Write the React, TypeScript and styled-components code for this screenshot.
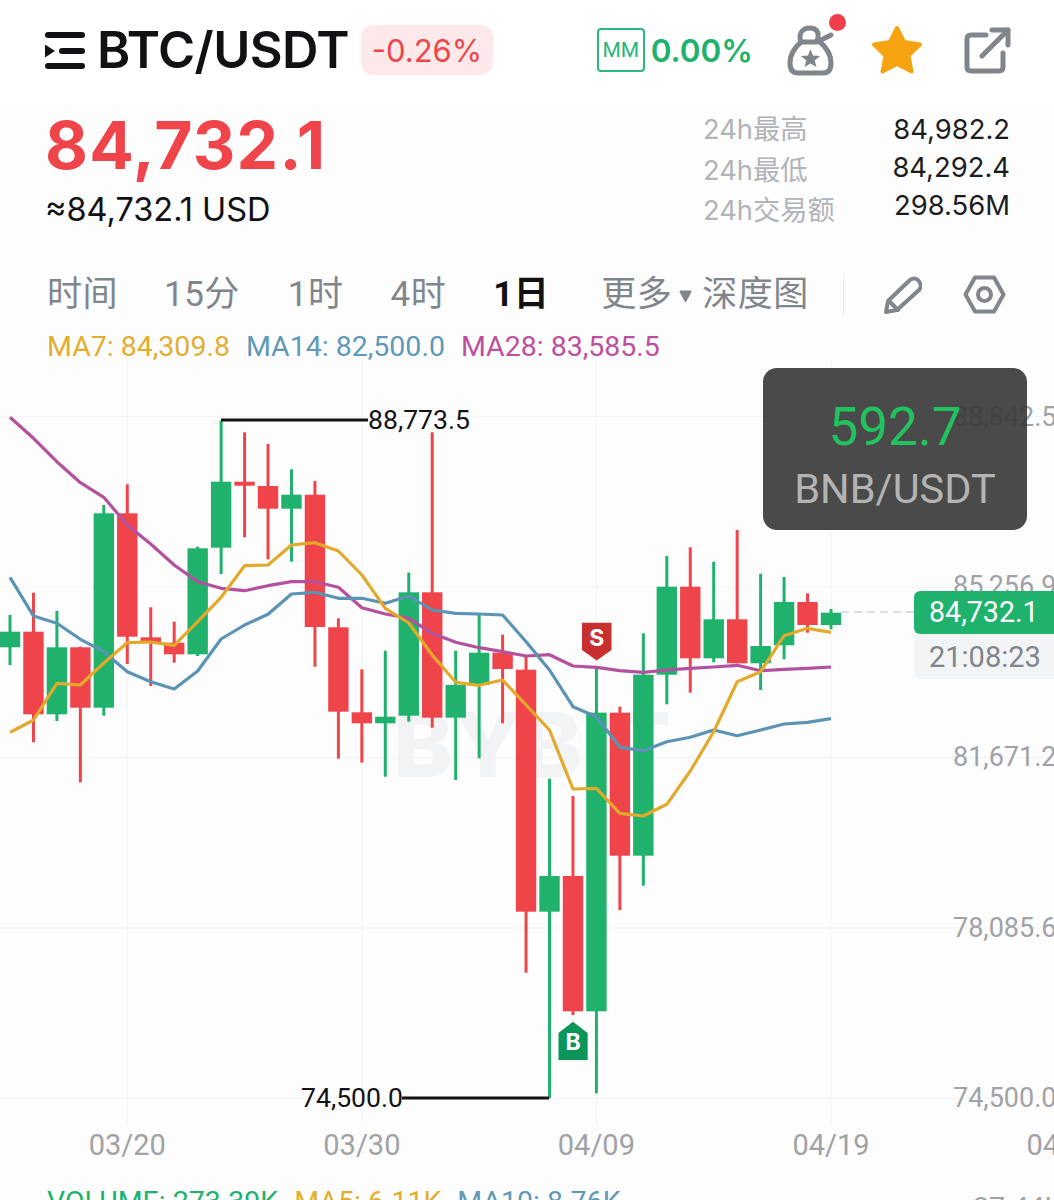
import React from 'react';
import styled, { createGlobalStyle } from 'styled-components';

const UP = '#20b26c';
const DOWN = '#ef454a';
const GREY = '#81858c';
const CJK = '"Noto Sans CJK SC", sans-serif';
const CHART_TOP = 360;

// [body top, body bottom, wick top, wick bottom, up?] in page pixels
type Candle = [number, number, number, number, boolean];

const candles: Candle[] = [
  [631.7, 647.3, 615, 665, true],
  [631.7, 714.3, 592.7, 742.3, false],
  [647.3, 714.3, 611, 721, true],
  [647.3, 707.7, 646.7, 782.3, false],
  [513.3, 707.7, 505, 715.7, true],
  [513.3, 636.7, 484.3, 664, false],
  [637.3, 642.7, 607.3, 686, false],
  [642.7, 654.3, 621.7, 662.7, false],
  [548.3, 654.3, 546.7, 656, true],
  [481.7, 547.7, 420.7, 574, true],
  [481.7, 485.7, 432.3, 537.3, false],
  [486, 508.7, 444, 559.3, false],
  [494.7, 508.7, 469.3, 561.7, true],
  [494.7, 627, 481, 666.7, false],
  [627.3, 711.7, 618.3, 758.7, false],
  [712.3, 723.3, 669.3, 762.7, false],
  [716.7, 723.3, 650.7, 776.7, true],
  [592.3, 715.7, 572.7, 721.7, true],
  [592.3, 717.7, 432.3, 727.7, false],
  [685, 717.7, 650.7, 780, true],
  [652.7, 685, 613.3, 758.3, true],
  [652.7, 669, 634.7, 723.3, false],
  [669.7, 911.7, 656.7, 972.7, false],
  [876, 911.7, 778.7, 1098.3, true],
  [876, 1011.3, 796, 1015, false],
  [712.7, 1011.3, 667, 1093.3, true],
  [712.7, 855.7, 706.7, 910, false],
  [674.7, 855.7, 633.3, 885.7, true],
  [586.7, 674.7, 556, 704.3, true],
  [586.7, 658.3, 547.3, 692.7, false],
  [619.3, 658.3, 561.7, 662.3, true],
  [619.3, 663.3, 530, 663.3, false],
  [646, 663.3, 573.7, 690, true],
  [602, 645.3, 577, 659.3, true],
  [602, 625, 593.3, 632.7, false],
  [612.7, 625, 609, 629.3, true],
];

const ma7 = [732.3, 720, 683.3, 685, 663, 642.7, 642, 645.3, 621.7, 597.3, 565.7, 565, 545, 542.7, 551, 575, 608.3, 623, 655, 682.3, 685.3, 680, 705, 730, 789, 788.3, 813.3, 816, 804.3, 771, 731.7, 681.7, 671.7, 635.7, 628.3, 632.3];
const ma14 = [577.3, 616, 623.3, 639.3, 651.7, 671.7, 681.7, 689, 671, 639, 625, 614.3, 594, 592.3, 598.3, 598.3, 603.3, 596, 610, 613.3, 614, 615, 641.7, 670, 706.7, 716.7, 747.3, 750.7, 741.7, 737.3, 730, 735.7, 730, 724, 722.3, 718.7];
const ma28 = [417.3, 438.3, 461.7, 482.7, 497.3, 525, 544, 565, 581.7, 588.3, 590.7, 585.7, 581.7, 581.7, 587.3, 607.7, 614, 618.3, 633.3, 642.3, 647.7, 651.7, 656, 654.7, 666, 667.3, 670.7, 672.3, 670, 668.3, 667, 665.3, 670.7, 669.3, 668.3, 667];

const candleX = (i: number) => 10 + 23.457 * i;
const linePoints = (ys: number[]) => ys.map((y, i) => `${candleX(i).toFixed(1)},${y}`).join(' ');

const gridX = [127.3, 361.9, 596.4, 831];
const priceLabels = [
  { text: '88,842.5', y: 417 },
  { text: '85,256.9', y: 586 },
  { text: '81,671.2', y: 757 },
  { text: '78,085.6', y: 928 },
  { text: '74,500.0', y: 1098 },
];
const dateLabels = [
  { text: '03/20', x: 127.3 },
  { text: '03/30', x: 361.9 },
  { text: '04/09', x: 596.4 },
  { text: '04/19', x: 831 },
  { text: '04/29', x: 1065 },
];

const GlobalStyle = createGlobalStyle`
  html, body {
    margin: 0;
    padding: 0;
    background: #fff;
  }
`;

const Page = styled.div`
  width: 1054px;
  height: 1200px;
  overflow: hidden;
  background: #fdfdfd;
  font-family: Inter, ${CJK};
  position: relative;
`;

const Header = styled.header`
  height: 104px;
  background: #fff;
  box-sizing: border-box;
  padding: 25px 43px 0 45px;
  display: flex;
  align-items: flex-start;
`;

const PairGroup = styled.div`
  display: flex;
  align-items: center;
  height: 50px;
`;

const Pair = styled.h1`
  margin: 0 0 0 12px;
  font-size: 50.5px;
  line-height: 50px;
  font-weight: 600;
  color: #121214;
  letter-spacing: -0.6px;
`;

const ChangeBadge = styled.div`
  margin-left: 12px;
  width: 132px;
  height: 50px;
  border-radius: 12px;
  background: #fde9ea;
  color: ${DOWN};
  font-size: 31px;
  display: flex;
  align-items: center;
  justify-content: center;
`;

const Actions = styled.div`
  margin-left: auto;
  display: flex;
  align-items: center;
  height: 50px;
`;

const MMBox = styled.div`
  width: 48px;
  height: 44px;
  box-sizing: border-box;
  border: 2px solid #2ab87e;
  border-radius: 4px;
  color: #22b77a;
  font: 400 21px Roboto, sans-serif;
  display: flex;
  align-items: center;
  justify-content: center;
`;

const MMValue = styled.span`
  margin-left: 6px;
  font-size: 31.5px;
  font-weight: 600;
  color: ${UP};
`;

const IconSlot = styled.div<{ $gap: number }>`
  margin-left: ${p => p.$gap}px;
  position: relative;
  display: flex;
`;

const NoticeDot = styled.span`
  position: absolute;
  right: -12px;
  top: -11px;
  width: 17px;
  height: 17px;
  border-radius: 50%;
  background: #ee3f4b;
`;

const Summary = styled.section`
  display: flex;
  justify-content: space-between;
  padding: 3px 44px 0 45px;
  height: 153px;
  box-sizing: border-box;
`;

const PriceBlock = styled.div`
  display: flex;
  flex-direction: column;
`;

const LastPrice = styled.div`
  font-size: 66px;
  line-height: 76px;
  font-weight: 700;
  letter-spacing: 1.2px;
  color: ${DOWN};
`;

const FiatPrice = styled.div`
  font-size: 32.5px;
  line-height: 38px;
  margin-top: 8px;
  font-weight: 400;
  color: #121214;
`;

const Stats = styled.div`
  width: 307px;
  display: flex;
  justify-content: space-between;
  padding-top: 3px;
`;

const StatColumn = styled.div<{ $row: number; $align: string }>`
  display: flex;
  flex-direction: column;
  align-items: ${p => p.$align};
  & > span {
    height: ${p => p.$row}px;
    line-height: ${p => p.$row}px;
  }
`;

const StatLabel = styled.span`
  color: #b1b4b8;
  font: 400 27.3px Inter, ${CJK};
  white-space: nowrap;
`;

const StatValue = styled.span`
  color: #1c1c20;
  font: 400 27.4px Inter, sans-serif;
`;

const Tabs = styled.nav`
  height: 60px;
  box-sizing: border-box;
  padding: 1px 0 0 47px;
  display: flex;
  align-items: center;
  margin-top: 7px;
`;

const Tab = styled.span<{ $active?: boolean; $gap?: number }>`
  margin-left: ${p => p.$gap ?? 47}px;
  font-family: Roboto, ${CJK};
  font-size: 35px;
  letter-spacing: 0.5px;
  font-weight: ${p => (p.$active ? 700 : 400)};
  color: ${p => (p.$active ? '#121214' : GREY)};
  line-height: 44px;
  &:first-child {
    margin-left: 0;
  }
`;

const MoreArrow = styled.svg`
  margin: 3px 10px 0 7px;
`;

const Divider = styled.span`
  width: 1px;
  height: 44px;
  background: #eceded;
  margin: 0 40px 0 34px;
`;

const ToolIcon = styled.svg<{ $gap?: number }>`
  margin-left: ${p => p.$gap ?? 0}px;
`;

const LegendRow = styled.div<{ $size: number }>`
  display: flex;
  gap: 16px;
  padding-left: 47px;
  font: 400 ${p => p.$size}px Roboto, sans-serif;
`;

const Tone = styled.span<{ $color: string }>`
  color: ${p => p.$color};
`;

const MaLegend = styled(LegendRow)`
  height: 36px;
  box-sizing: border-box;
  padding-top: 9px;
  line-height: 27px;
`;

const Chart = styled.div`
  position: relative;
  height: 825px;
  overflow: hidden;
`;

const Watermark = styled.div`
  position: absolute;
  left: 393px;
  top: 340px;
  font: 800 90px/1 Inter, sans-serif;
  letter-spacing: 1px;
  color: #f2f3f5;
`;

const Plot = styled.svg`
  position: absolute;
  inset: 0;
`;

const AxisLabel = styled.span`
  position: absolute;
  transform: translateY(-50%);
  font: 400 27px Roboto, sans-serif;
  color: #a0a2a6;
  white-space: nowrap;
`;

const DateLabel = styled(AxisLabel)`
  transform: translate(-50%, -50%);
  font-size: 29px;
`;

const PeakLabel = styled(AxisLabel)`
  font-size: 26.6px;
  color: #121214;
`;

const MarkLabel = styled.span<{ $x: number; $y: number }>`
  position: absolute;
  left: ${p => p.$x}px;
  top: ${p => p.$y}px;
  transform: translate(-50%, -50%);
  font: 700 23px Inter, sans-serif;
  color: #fff;
`;

const LiveTag = styled.div`
  position: absolute;
  left: 914px;
  top: 231px;
  width: 140px;
`;

const LivePrice = styled.div`
  height: 43px;
  background: ${UP};
  border-radius: 6px 0 0 6px;
  padding-left: 15px;
  font: 400 28.6px/43px Roboto, sans-serif;
  color: #fff;
`;

const Countdown = styled.div`
  height: 44px;
  background: #f3f4f6;
  border-radius: 0 0 0 6px;
  padding: 1px 0 0 15px;
  font: 400 29px/44px Roboto, sans-serif;
  color: #81858c;
`;

const Ticker = styled.div`
  position: absolute;
  left: 763px;
  top: 8px;
  width: 264px;
  height: 162px;
  border-radius: 14px;
  background: rgba(56, 56, 56, 0.91);
  display: flex;
  flex-direction: column;
  align-items: center;
`;

const TickerPrice = styled.div`
  margin-top: 24px;
  font: 400 53px/70px Roboto, sans-serif;
  color: #22c35e;
`;

const TickerPair = styled.div`
  margin-top: 2px;
  font: 400 41.5px/50px Roboto, sans-serif;
  color: #b4b4b4;
`;

const VolumeLegend = styled(LegendRow)`
  line-height: 33px;
  position: relative;
`;

const VolumeScale = styled.span`
  position: absolute;
  left: 973px;
  top: 6px;
  color: #a0a2a6;
`;

const App: React.FC = () => {
  return (
    <>
      <GlobalStyle />
      <Page>
        <Header>
          <PairGroup>
            <svg width="40" height="37" viewBox="0 0 40 37" fill="#121214">
              <rect x="0" y="0" width="40" height="6" rx="3" />
              <rect x="0" y="31" width="40" height="6" rx="3" />
              <rect x="14" y="16" width="26" height="6" rx="3" />
              <path d="M0 12.5 L10 19 L0 25.5 Z" />
            </svg>
            <Pair>BTC/USDT</Pair>
            <ChangeBadge>-0.26%</ChangeBadge>
          </PairGroup>
          <Actions>
            <MMBox>MM</MMBox>
            <MMValue>0.00%</MMValue>
            <IconSlot $gap={34}>
              <svg width="47" height="51" viewBox="0 0 47 51" fill="none" stroke={GREY} strokeWidth="5" strokeLinecap="round" strokeLinejoin="round">
                <path d="M14 17 C7 23 3 31 3 38 C3 45 6 48 11 48 H36 C41 48 44 45 44 38 C44 31 40 23 33 17" />
                <path d="M14 17 C11 9 15 3 23 3 C30 3 33 8 30 16" />
                <path d="M14 17 H30 L44 10" />
                <path d="M23.5 24 L26 30.5 L33 31 L27.7 35.4 L29.5 42 L23.5 38.4 L17.5 42 L19.3 35.4 L14 31 L21 30.5 Z" fill={GREY} stroke="none" />
              </svg>
              <NoticeDot />
            </IconSlot>
            <IconSlot $gap={37}>
              <svg width="52" height="50" viewBox="0 0 52 50">
                <path
                  d="M26 3 L33 17 L49 19.5 L37.5 30.5 L40.5 46.5 L26 39 L11.5 46.5 L14.5 30.5 L3 19.5 L19 17 Z"
                  fill="#f5a30f"
                  stroke="#f5a30f"
                  strokeWidth="4"
                  strokeLinejoin="round"
                />
              </svg>
            </IconSlot>
            <IconSlot $gap={41}>
              <svg width="47" height="47" viewBox="0 0 47 47" fill="none" stroke={GREY} strokeWidth="5" strokeLinecap="round" strokeLinejoin="round">
                <path d="M22 8 H7 Q3 8 3 12 V40 Q3 44 7 44 H35 Q39 44 39 40 V26" />
                <path d="M18 29 L44 3" />
                <path d="M28 3 H44 V18" />
              </svg>
            </IconSlot>
          </Actions>
        </Header>

        <Summary>
          <PriceBlock>
            <LastPrice>84,732.1</LastPrice>
            <FiatPrice>≈84,732.1 USD</FiatPrice>
          </PriceBlock>
          <Stats>
            <StatColumn $row={40.5} $align="flex-start">
              <StatLabel>24h最高</StatLabel>
              <StatLabel>24h最低</StatLabel>
              <StatLabel>24h交易额</StatLabel>
            </StatColumn>
            <StatColumn $row={38} $align="flex-end">
              <StatValue>84,982.2</StatValue>
              <StatValue>84,292.4</StatValue>
              <StatValue>298.56M</StatValue>
            </StatColumn>
          </Stats>
        </Summary>

        <Tabs>
          <Tab>时间</Tab>
          <Tab $gap={46}>15分</Tab>
          <Tab $gap={48}>1时</Tab>
          <Tab>4时</Tab>
          <Tab $active>1日</Tab>
          <Tab $gap={52}>更多</Tab>
          <MoreArrow width="13" height="14" viewBox="0 0 13 14">
            <path d="M1.5 2.5 H11.5 L6.5 12 Z" fill={GREY} stroke={GREY} strokeWidth="2" strokeLinejoin="round" />
          </MoreArrow>
          <Tab $gap={0}>深度图</Tab>
          <Divider />
          <ToolIcon width="38" height="38" viewBox="0 0 38 38" fill="none" stroke={GREY} strokeWidth="4" strokeLinejoin="round" strokeLinecap="round">
            <path d="M2 36 L4 25 L26 4 Q30 1 34 4 L36 7 Q38 11 35 14 L13 34 Z" />
            <path d="M5 25 L14 34" />
          </ToolIcon>
          <ToolIcon $gap={41} width="43" height="39" viewBox="0 0 43 39" fill="none" stroke={GREY} strokeWidth="4" strokeLinejoin="round">
            <path d="M2.5 19.5 L12 2.5 H31 L40.5 19.5 L31 36.5 H12 Z" />
            <circle cx="21.5" cy="19.5" r="6.5" />
          </ToolIcon>
        </Tabs>

        <MaLegend $size={28.5}>
          <Tone $color="#e3ad2f">MA7: 84,309.8</Tone>
          <Tone $color="#5f99b5">MA14: 82,500.0</Tone>
          <Tone $color="#bf4f9e">MA28: 83,585.5</Tone>
        </MaLegend>

        <Chart>
          <Watermark>BYBIT</Watermark>
          <Plot width="1054" height="825" viewBox={`0 ${CHART_TOP} 1054 825`}>
            <g stroke="#f2f3f4" strokeWidth="1">
              {gridX.map(x => (
                <line key={x} x1={x} x2={x} y1={360} y2={1126} />
              ))}
              {[416.7, 587, 757.5, 928, 1098.3].map(y => (
                <line key={y} x1={0} x2={1054} y1={y} y2={y} />
              ))}
            </g>
            {candles.map(([top, bottom, high, low, up], i) => {
              const x = candleX(i);
              const color = up ? UP : DOWN;
              return (
                <g key={i} fill={color}>
                  <rect x={x - 1.5} y={high} width={3} height={low - high} />
                  <rect x={x - 10.2} y={top} width={20.4} height={bottom - top} />
                </g>
              );
            })}
            <g fill="none" strokeWidth="3.2" strokeLinejoin="round">
              <polyline points={linePoints(ma28)} stroke="#b4519f" />
              <polyline points={linePoints(ma14)} stroke="#5a93b4" />
              <polyline points={linePoints(ma7)} stroke="#e3a92b" />
            </g>
            <line x1={841} x2={914} y1={612} y2={612} stroke="#bdbfc2" strokeWidth="1" strokeDasharray="8 5" />
            <path d="M221 420 H368" stroke="#121214" strokeWidth="3" />
            <path d="M402 1098 H549" stroke="#121214" strokeWidth="3" />
            <path d="M582 622.7 H611.5 V650 L596.7 660.5 L582 650 Z" fill="#c8302f" />
            <path d="M558.5 1033 L573 1021.7 L587.7 1033 V1060 H558.5 Z" fill="#0b9558" />
          </Plot>

          {priceLabels.map(l => (
            <AxisLabel key={l.text} style={{ left: 953, top: l.y - CHART_TOP }}>
              {l.text}
            </AxisLabel>
          ))}
          {dateLabels.map(l => (
            <DateLabel key={l.text} style={{ left: l.x, top: 1145 - CHART_TOP }}>
              {l.text}
            </DateLabel>
          ))}
          <PeakLabel style={{ left: 368, top: 419 - CHART_TOP }}>88,773.5</PeakLabel>
          <PeakLabel style={{ left: 301, top: 1097 - CHART_TOP }}>74,500.0</PeakLabel>
          <MarkLabel $x={596.7} $y={278}>S</MarkLabel>
          <MarkLabel $x={573} $y={682}>B</MarkLabel>

          <LiveTag>
            <LivePrice>84,732.1</LivePrice>
            <Countdown>21:08:23</Countdown>
          </LiveTag>

          <Ticker>
            <TickerPrice>592.7</TickerPrice>
            <TickerPair>BNB/USDT</TickerPair>
          </Ticker>
        </Chart>

        <VolumeLegend $size={28.5}>
          <Tone $color="#20b26c">VOLUME: 273.39K</Tone>
          <Tone $color="#e3ad2f">MA5: 6.11K</Tone>
          <Tone $color="#5f99b5">MA10: 8.76K</Tone>
          <VolumeScale>27.44K</VolumeScale>
        </VolumeLegend>
      </Page>
    </>
  );
};

export default App;
